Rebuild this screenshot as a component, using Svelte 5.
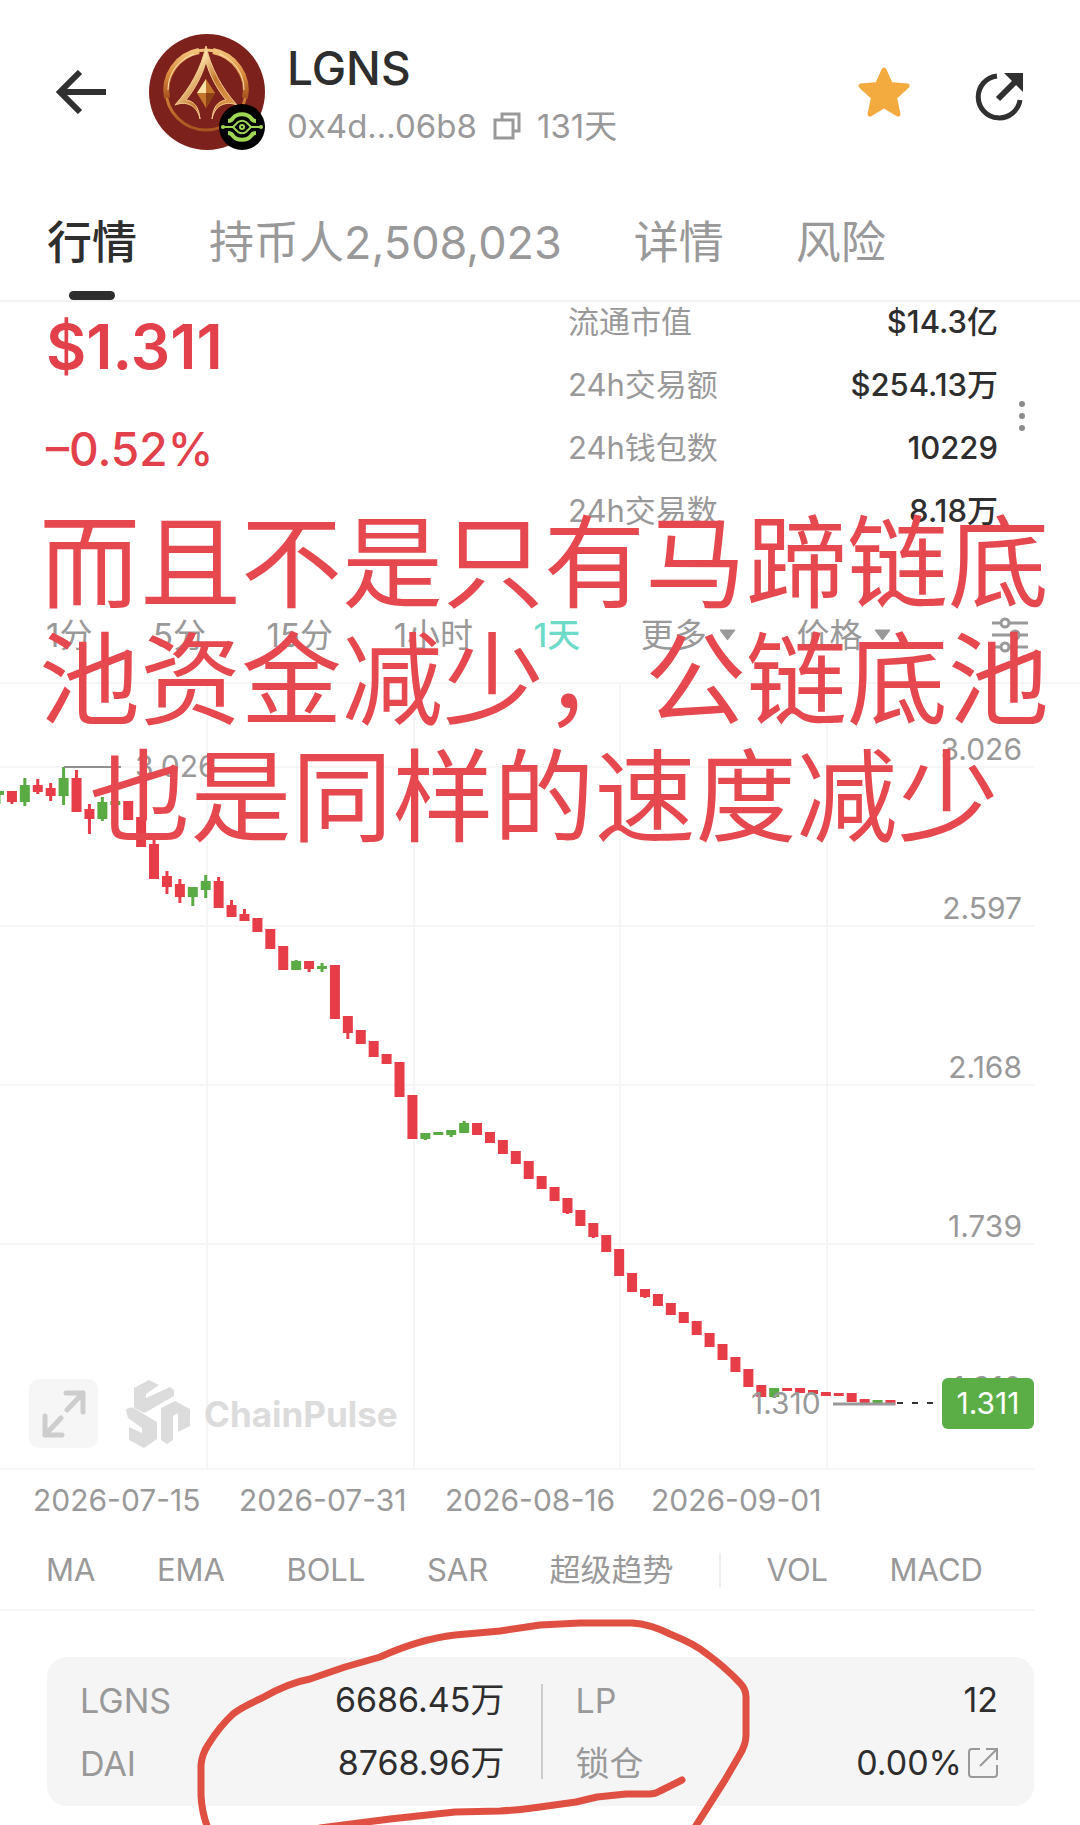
<script>
  const tabs = ['行情', '持币人2,508,023', '详情', '风险'];
  let activeTab = $state('行情');

  const stats = [
    ['流通市值', '$14.3亿'],
    ['24h交易额', '$254.13万'],
    ['24h钱包数', '10229'],
    ['24h交易数', '8.18万'],
  ];

  const intervals = ['1分', '5分', '15分', '1小时', '1天'];
  let activeInterval = $state('1天');

  const overlays = ['MA', 'EMA', 'BOLL', 'SAR', '超级趋势'];
  const subcharts = ['VOL', 'MACD'];
  const dates = ['2026-07-15', '2026-07-31', '2026-08-16', '2026-09-01'];

  const rows = [244, 403, 562];
  const cols = [207, 414, 620, 827];
  const axis = [
    ['3.026', 68],
    ['2.597', 227],
    ['2.168', 386],
    ['1.739', 545],
    ['1.310', 706],
  ];

  // Each candle: body top, body bottom, wick top, wick bottom, rising
  const candles = [
    [109, 113, 109, 122, 1],
    [109, 120, 109, 122, 0],
    [103, 120, 96, 124, 1],
    [103, 110, 97, 112, 0],
    [106, 114, 101, 119, 0],
    [96, 114, 85, 123, 1],
    [96, 130, 88, 130, 0],
    [127, 137, 122, 152, 0],
    [120, 137, 115, 139, 1],
    [119, 123, 114, 130, 1],
    [119, 138, 119, 138, 0],
    [135, 165, 135, 165, 0],
    [162, 197, 158, 197, 0],
    [194, 205, 189, 212, 0],
    [202, 215, 197, 221, 0],
    [205, 215, 205, 224, 1],
    [199, 208, 193, 216, 1],
    [199, 226, 195, 226, 0],
    [223, 235, 218, 235, 0],
    [232, 239, 227, 239, 0],
    [236, 250, 236, 250, 0],
    [247, 267, 247, 267, 0],
    [264, 288, 264, 288, 0],
    [279, 288, 278, 288, 1],
    [279, 287, 279, 290, 0],
    [284, 287, 281, 290, 1],
    [283, 337, 283, 337, 0],
    [334, 351, 334, 357, 0],
    [348, 362, 348, 362, 0],
    [359, 375, 359, 375, 0],
    [372, 382, 372, 382, 0],
    [380, 415, 380, 415, 0],
    [413, 457, 413, 457, 0],
    [451, 457, 451, 458, 1],
    [450, 453, 450, 453, 1],
    [448, 453, 448, 455, 1],
    [441, 451, 439, 451, 1],
    [441, 453, 441, 453, 0],
    [450, 461, 450, 461, 0],
    [458, 472, 458, 472, 0],
    [469, 482, 469, 482, 0],
    [479, 497, 479, 497, 0],
    [494, 507, 494, 507, 0],
    [505, 519, 505, 519, 0],
    [516, 531, 516, 532, 0],
    [528, 544, 528, 544, 0],
    [541, 555, 541, 556, 0],
    [553, 570, 553, 570, 0],
    [567, 594, 567, 594, 0],
    [591, 610, 591, 610, 0],
    [607, 615, 607, 616, 0],
    [612, 624, 612, 624, 0],
    [621, 633, 621, 633, 0],
    [630, 641, 630, 641, 0],
    [639, 653, 639, 653, 0],
    [651, 665, 651, 665, 0],
    [662, 678, 662, 678, 0],
    [675, 690, 675, 690, 0],
    [687, 705, 687, 705, 0],
    [703, 715, 703, 715, 0],
    [706, 715, 706, 716, 1],
    [706, 709, 706, 709, 0],
    [706, 711, 706, 711, 0],
    [708, 712, 708, 712, 0],
    [710, 714, 710, 714, 0],
    [711, 714, 711, 714, 0],
    [711, 720, 711, 720, 0],
    [717, 721, 717, 721, 0],
    [718, 722, 718, 722, 1],
    [718, 723, 718, 723, 0],
  ];
  const pitch = 12.92;
  const candleX = (i) => -1 + i * pitch;
</script>

<main class="page">
  <header class="top">
    <button class="icon back" aria-label="返回">
      <svg width="50" height="44" viewBox="0 0 50 44" fill="none" stroke="#303030" stroke-width="6">
        <path d="M24 2 4 22l20 20M4 22h46" />
      </svg>
    </button>
    <div class="avatar">
      <svg width="116" height="116" viewBox="0 0 116 116" fill="none">
        <defs>
          <linearGradient id="gold" x1="0" y1="0" x2="1" y2="1">
            <stop offset="0" stop-color="#c98337" />
            <stop offset=".3" stop-color="#fbe2a8" />
            <stop offset=".55" stop-color="#c5762d" />
            <stop offset="1" stop-color="#e7a659" />
          </linearGradient>
          <linearGradient id="ring" x1="0" y1="0" x2="0" y2="1">
            <stop offset="0" stop-color="#f3c27a" />
            <stop offset=".5" stop-color="#d98a3c" />
            <stop offset="1" stop-color="#a8541f" />
          </linearGradient>
        </defs>
        <circle cx="58" cy="58" r="58" fill="#7c211c" />
        <circle cx="57" cy="56" r="40" stroke="url(#ring)" stroke-width="3" />
        <path d="M18 64A40 40 0 0 1 50 17M64 17a40 40 0 0 1 32 47" stroke="url(#ring)" stroke-width="6" />
        <path d="M19 56a38 38 0 0 1 26-36M70 20a38 38 0 0 1 25 36" stroke="#fbe5b5" stroke-width="1" />
        <path d="M57 12C52 34 42 53 26 71c10-4 22-1 25 14-1-12-6-18-14-19 9-11 16-24 20-38 4 14 11 27 20 38-8 1-13 7-14 19 3-15 15-18 25-14C72 53 62 34 57 12Z" fill="url(#gold)" stroke="#f2c98d" stroke-width="1" />
        <path d="m57 45 9 14-9 15-9-15Z" fill="#c5762d" />
        <path d="m57 45 0 14-9 0Z" fill="#fbe2a8" />
        <path d="M57 59h9l-9 15Z" fill="#8d4316" />
      </svg>
      <svg class="chain" width="46" height="46" viewBox="0 0 46 46" fill="none" stroke="#9fd654">
        <circle cx="23" cy="23" r="23" fill="#000" stroke="none" />
        <path d="M9 17c3 0 4-1 5-3 4-5 14-5 18 0 1 2 2 3 5 3M9 29c3 0 4 1 5 3 4 5 14 5 18 0 1-2 2-3 5-3" stroke-width="4" />
        <path d="M4 23h10l5-5c3-2 5-2 8 0l5 5h10M14 23l5 5c3 2 5 2 8 0l5-5" stroke-width="2" />
        <circle cx="23" cy="23" r="2" stroke-width="2" />
        <circle cx="4" cy="23" r="2" fill="#9fd654" stroke="none" />
        <circle cx="42" cy="23" r="2" fill="#9fd654" stroke="none" />
      </svg>
    </div>
    <div class="identity">
      <h1>LGNS</h1>
      <div class="address">
        <span>0x4d...06b8</span>
        <button class="icon" aria-label="复制地址">
          <svg width="28" height="28" viewBox="0 0 28 28" fill="none" stroke="#999" stroke-width="3">
            <path d="M2 8h18v18H2zM9 8V2h17v17h-6" />
          </svg>
        </button>
        <span>131天</span>
      </div>
    </div>
    <div class="actions">
      <button class="icon" aria-label="收藏">
        <svg width="54" height="52" viewBox="0 0 54 52">
          <path d="m27 4 6.500 14.500 16.500 1.500-12.500 11.500 3.500 16.500-14-8.500-14 8.500 3.500-16.500L4 20l16.500-1.500Z" fill="#f3ab40" stroke="#f3ab40" stroke-width="5" stroke-linejoin="round" />
        </svg>
      </button>
      <button class="icon share" aria-label="分享">
        <svg width="50" height="50" viewBox="0 0 50 50" fill="none" stroke="#303030" stroke-width="5">
          <path d="M22 4a21 21 0 1 0 23 24" />
          <path d="M23 27 40 10" stroke-width="6" />
          <path d="M29 1h19v19Z" fill="#303030" stroke="none" />
        </svg>
      </button>
    </div>
  </header>

  <nav class="tabs">
    {#each tabs as tab}
      <button class:active={tab === activeTab} onclick={() => (activeTab = tab)}>{tab}</button>
    {/each}
  </nav>

  <section class="summary">
    <div class="quote">
      <strong>$1.311</strong>
      <span>–0.52%</span>
    </div>
    <dl>
      {#each stats as [label, value]}
        <div><dt>{label}</dt><dd>{value}</dd></div>
      {/each}
    </dl>
    <button class="icon more" aria-label="更多数据">
      <svg width="6" height="32" viewBox="0 0 6 32" fill="#8c8c8c">
        <circle cx="3" cy="4" r="3" /><circle cx="3" cy="16" r="3" /><circle cx="3" cy="28" r="3" />
      </svg>
    </button>
  </section>

  <section class="intervals">
    {#each intervals as item}
      <button class:active={item === activeInterval} onclick={() => (activeInterval = item)}>{item}</button>
    {/each}
    <div class="pick">
      <select aria-label="更多周期"><option>更多</option></select>
      <svg width="17" height="12" viewBox="0 0 17 12"><path d="M1 1h15L8.500 11Z" fill="#999" stroke="#999" stroke-linejoin="round" /></svg>
    </div>
    <div class="pick">
      <select aria-label="图表类型"><option>价格</option></select>
      <svg width="17" height="12" viewBox="0 0 17 12"><path d="M1 1h15L8.500 11Z" fill="#999" stroke="#999" stroke-linejoin="round" /></svg>
    </div>
    <button class="icon settings" aria-label="图表设置">
      <svg width="36" height="36" viewBox="0 0 36 36" fill="#fff" stroke="#999" stroke-width="3">
        <path d="M0 6h36M0 18h36M0 30h36" />
        <circle cx="13" cy="6" r="4" /><circle cx="23" cy="18" r="4" /><circle cx="13" cy="30" r="4" />
      </svg>
    </button>
  </section>

  <section class="chart">
    <svg class="plot" viewBox="0 0 1080 788" role="img" aria-label="LGNS 日线走势">
      <g stroke="#f6f6f6" stroke-width="2">
        <path d="M0 1H1080M0 85H1034M0 787H1034" />
        {#each rows as y}<path d="M0 {y}H1034" />{/each}
        {#each cols as x}<path d="M{x} 0V788" />{/each}
      </g>
      {#each axis as [label, y]}
        <text class="axis" x="1022" y={y + 10} text-anchor="end">{label}</text>
      {/each}
      {#each candles as [top, bottom, high, low, up], i}
        <g fill={up ? '#5bab45' : '#e63d49'}>
          <rect x={candleX(i) - 5} y={top} width="10" height={bottom - top} />
          <rect x={candleX(i) - 1.5} y={high} width="3" height={low - high} />
        </g>
      {/each}
      <path d="M64 85h57" stroke="#8f8f8f" stroke-width="2" />
      <text class="axis" x="135" y="95">3.026</text>
      <text class="axis" x="751" y="732">1.310</text>
      <path d="M833 722h62" stroke="#999" stroke-width="3" />
      <path d="M897 721h46" stroke="#333" stroke-width="2" stroke-dasharray="6 9" />
      <rect x="942" y="696" width="92" height="51" rx="6" fill="#5bae46" />
      <text class="axis last" x="988" y="732" text-anchor="middle">1.311</text>
    </svg>
    <div class="corner">
      <button class="icon expand" aria-label="全屏">
        <svg width="44" height="48" viewBox="0 0 44 48" fill="none" stroke="#cdcdcd" stroke-width="5" stroke-linecap="round" stroke-linejoin="round">
          <path d="M24 3h17v19M41 3 25 20M3 26v19h17M3 45l16-17" />
        </svg>
      </button>
      <div class="brand">
        <svg width="64" height="68" viewBox="0 0 64 68" fill="#dcdcdc">
          <path d="m8 8 15-8 10 5-13 9v4l24-11 4 3v6L22 31l-4 2-10-5Z" />
          <path d="M0 30c3-3 6-3 9-1l22 13v17L18 68 3 60V47l13 6v-5L2 38Z" />
          <path d="m35 28 14-7 15 8v17l-12 6V33l-5 3v24l-6 4-6-4Z" />
        </svg>
        <span>ChainPulse</span>
      </div>
    </div>
  </section>

  <div class="dates">
    {#each dates as date}<time datetime={date}>{date}</time>{/each}
  </div>

  <section class="indicators">
    {#each overlays as name}<button>{name}</button>{/each}
    <i></i>
    {#each subcharts as name}<button>{name}</button>{/each}
  </section>

  <section class="pool">
    <dl>
      <div><dt>LGNS</dt><dd>6686.45万</dd></div>
      <div><dt>DAI</dt><dd>8768.96万</dd></div>
    </dl>
    <dl>
      <div><dt>LP</dt><dd>12</dd></div>
      <div>
        <dt>锁仓</dt>
        <dd>
          0.00%
          <a href="#lock" aria-label="查看锁仓">
            <svg width="30" height="30" viewBox="0 0 30 30" fill="none" stroke="#999" stroke-width="2">
              <path d="M12 1H4a3 3 0 0 0-3 3v22a3 3 0 0 0 3 3h22a3 3 0 0 0 3-3V17M18 1h11v11M29 1 12 18" />
            </svg>
          </a>
        </dd>
      </div>
    </dl>
  </section>

  <p class="note">而且不是只有马蹄链底池资金减少，公链底池也是同样的速度减少</p>
  <svg class="scribble" viewBox="0 0 560 220" fill="none" stroke="#df5042" stroke-width="7" stroke-linecap="round" stroke-linejoin="round">
    <path d="M492 175 470 186Q465 189 459 189H436L407 192 386 197 350 202Q330 205 310 206L265 207 200 214 130 223M21 230Q12 212 11 190V160Q12 149 18 140 29 122 43 109 50 103 72 93 98 78 120 74L155 62 190 52Q230 34 265 30L310 26 350 20 390 18H442Q460 19 480 29 505 39 517 49 535 62 550 78 556 84 556 92V130Q556 140 549 151L535 175 500 230" />
  </svg>
</main>

<style>
  :global(body) {
    background: #fff;
  }
  .page {
    position: relative;
    overflow: hidden;
    padding-bottom: 19px;
    background: #fff;
    color: #2e2e2e;
    font-family: Inter, 'Noto Sans CJK SC', sans-serif;
  }
  button,
  select {
    margin: 0;
    padding: 0;
    border: 0;
    background: none;
    color: inherit;
    font: inherit;
    cursor: pointer;
    appearance: none;
  }
  svg {
    display: block;
  }
  h1,
  p,
  dl,
  dd {
    margin: 0;
  }
  .icon {
    display: flex;
    flex: none;
    align-items: center;
    justify-content: center;
  }
  .top {
    display: flex;
    align-items: center;
    height: 184px;
    padding: 0 55px 0 56px;
  }
  .avatar {
    position: relative;
    margin: 0 22px 0 43px;
  }
  .chain {
    position: absolute;
    right: 0;
    bottom: 0;
  }
  .identity {
    padding-top: 10px;
  }
  h1 {
    font-size: 46px;
    font-weight: 500;
    line-height: 58px;
  }
  .address {
    display: flex;
    align-items: center;
    gap: 16px;
    color: #999;
    font-size: 33px;
    line-height: 58px;
  }
  .actions {
    display: flex;
    align-items: center;
    gap: 64px;
    margin-left: auto;
  }
  .share {
    padding-top: 10px;
  }
  .tabs {
    display: flex;
    gap: 72px;
    height: 116px;
    padding-left: 47px;
    border-bottom: 2px solid #f3f3f3;
    color: #999;
    font-size: 45px;
  }
  .tabs button {
    position: relative;
    padding-bottom: 6px;
  }
  .tabs .active {
    color: #2e2e2e;
    font-weight: 500;
  }
  .tabs .active::after {
    content: '';
    position: absolute;
    bottom: 0;
    left: 50%;
    width: 46px;
    height: 9px;
    margin-left: -23px;
    border-radius: 5px;
    background: #2e2e2e;
  }
  .summary {
    display: flex;
    height: 286px;
    padding: 0 55px 0 46px;
  }
  .quote {
    display: flex;
    flex: 1;
    flex-direction: column;
    gap: 35px;
    padding-top: 6px;
    color: #e2404b;
  }
  .quote strong {
    font-size: 62px;
    font-weight: 600;
    line-height: 78px;
  }
  .quote span {
    font-size: 46px;
    font-weight: 500;
    line-height: 56px;
  }
  .summary dl {
    display: flex;
    flex-direction: column;
    gap: 25px;
    width: 430px;
    padding-top: 1px;
    font-size: 31px;
    line-height: 38px;
  }
  dl > div {
    display: flex;
    justify-content: space-between;
  }
  dt {
    color: #999;
  }
  .summary dd {
    font-weight: 500;
  }
  .more {
    align-self: flex-start;
    margin-left: 21px;
    padding-top: 98px;
  }
  .intervals {
    display: flex;
    align-items: center;
    justify-content: space-between;
    height: 94px;
    padding: 0 52px 0 46px;
    color: #999;
    font-size: 33px;
    line-height: 44px;
  }
  .intervals .active {
    color: #6edbc9;
    font-weight: 500;
  }
  .pick {
    display: flex;
    align-items: center;
    gap: 12px;
  }
  .settings {
    margin-left: 40px;
  }
  .chart {
    position: relative;
  }
  .plot {
    width: 100%;
  }
  .axis {
    fill: #999;
    font-size: 30px;
  }
  .last {
    fill: #fff;
  }
  .corner {
    position: absolute;
    bottom: 22px;
    left: 29px;
    display: flex;
    align-items: center;
    gap: 28px;
  }
  .expand {
    width: 69px;
    height: 69px;
    border-radius: 10px;
    background: #f6f6f6;
  }
  .brand {
    display: flex;
    align-items: center;
    gap: 14px;
    color: #dcdcdc;
    font-size: 35px;
    font-weight: 700;
  }
  .dates {
    display: grid;
    grid-template-columns: repeat(4, 206fr) 223fr;
    padding-left: 33px;
    color: #999;
    font-size: 30px;
    line-height: 60px;
  }
  .indicators {
    display: flex;
    align-items: center;
    justify-content: space-between;
    height: 79px;
    margin-right: 46px;
    padding: 0 51px 0 46px;
    border-bottom: 2px solid #f5f5f5;
    color: #999;
    font-size: 31px;
    line-height: 40px;
  }
  .indicators i {
    width: 2px;
    height: 34px;
    margin: 0 -16px;
    background: #eee;
  }
  .pool {
    display: grid;
    grid-template-columns: 1fr 1fr;
    margin: 46px 46px 0 47px;
    padding: 27px 0;
    border-radius: 20px;
    background: #f5f5f5;
    font-size: 34px;
  }
  .pool dl {
    display: flex;
    flex-direction: column;
    gap: 31px;
    padding: 0 36px 0 33px;
  }
  .pool dl + dl {
    border-left: 2px solid #ccc;
  }
  .pool dl > div {
    height: 32px;
    line-height: 34px;
  }
  .pool dd {
    display: flex;
    align-items: center;
    gap: 6px;
  }
  .note {
    position: absolute;
    top: 505px;
    left: 36px;
    right: 28px;
    color: #e5484f;
    font-size: 101px;
    line-height: 117px;
    text-align: center;
    pointer-events: none;
  }
  .scribble {
    position: absolute;
    left: 190px;
    bottom: 0;
    width: 560px;
    pointer-events: none;
  }
</style>
